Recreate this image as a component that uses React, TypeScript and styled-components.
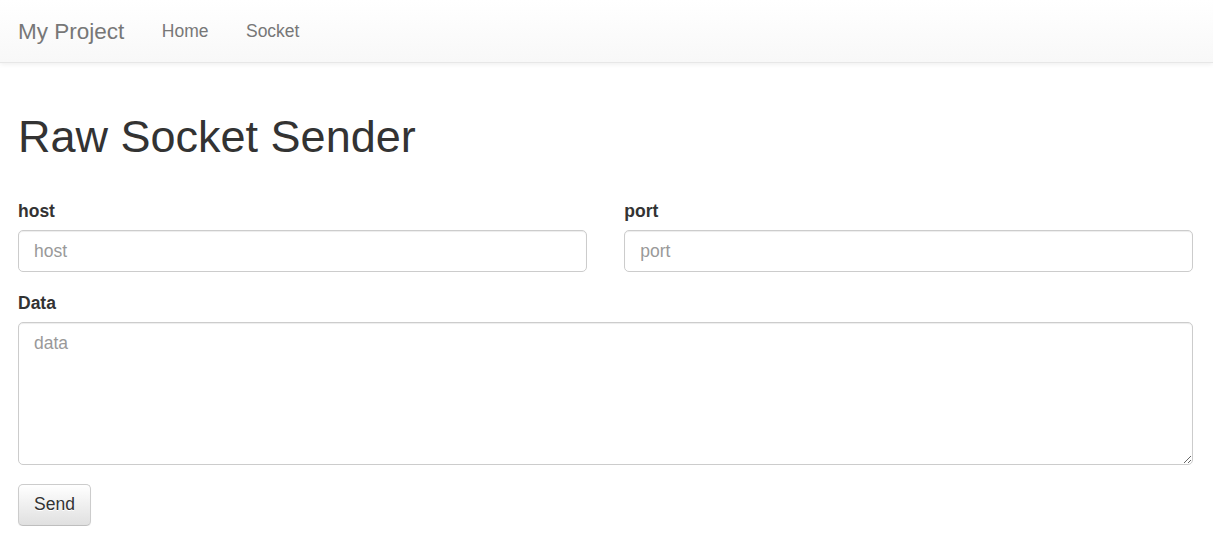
import styled, { createGlobalStyle } from "styled-components";

const GlobalStyle = createGlobalStyle`
  * {
    box-sizing: border-box;
  }
  body {
    margin: 0;
    font-family: "Liberation Sans", Arial, Helvetica, sans-serif;
    font-size: 17.5px;
    line-height: 1.42857;
    color: #333;
    background: #fff;
  }
`;

const Navbar = styled.nav`
  display: flex;
  align-items: stretch;
  height: 62.5px;
  padding: 0 18px;
  margin-bottom: 25px;
  background-image: linear-gradient(to bottom, #fff 0, #f8f8f8 100%);
  border-bottom: 1.25px solid #e7e7e7;
  box-shadow: inset 0 1px 0 rgba(255, 255, 255, 0.15),
    0 1px 5px rgba(0, 0, 0, 0.075);
`;

const Brand = styled.a`
  display: block;
  padding: 18.75px 18.75px 18.75px 0;
  font-size: 22.5px;
  line-height: 25px;
  color: #777;
  text-decoration: none;
  text-shadow: 0 1px 0 rgba(255, 255, 255, 0.25);
`;

const NavList = styled.ul`
  display: flex;
  list-style: none;
  margin: 0;
  padding: 0;
`;

const NavLink = styled.a`
  display: block;
  padding: 18.75px;
  line-height: 25px;
  color: #777;
  text-decoration: none;
  text-shadow: 0 1px 0 rgba(255, 255, 255, 0.25);
`;

const Container = styled.main`
  display: flow-root;
  padding: 0 20px 0 18px;
`;

const Title = styled.h1`
  margin: 24px 0 37.5px;
  font-size: 45px;
  font-weight: 500;
  line-height: 1.1;
  color: #333;
`;

const Row = styled.div`
  display: grid;
  grid-template-columns: 1fr 1fr;
  column-gap: 37.5px;
`;

const FormGroup = styled.div`
  margin-bottom: 18.75px;
`;

const Label = styled.label`
  display: block;
  margin-bottom: 6.25px;
  font-weight: 700;
  line-height: 25px;
`;

const fieldStyles = `
  display: block;
  width: 100%;
  padding: 7.5px 15px;
  font-family: inherit;
  font-size: 17.5px;
  line-height: 25px;
  color: #555;
  background: #fff;
  border: 1.25px solid #ccc;
  border-radius: 5px;
  box-shadow: inset 0 1px 1px rgba(0, 0, 0, 0.075);
  outline: none;
  &::placeholder {
    color: #999;
  }
`;

const Input = styled.input`
  ${fieldStyles}
  height: 42.5px;
`;

const TextArea = styled.textarea`
  ${fieldStyles}
  height: 142.5px;
  resize: vertical;
`;

const Button = styled.button`
  display: inline-block;
  height: 42.5px;
  padding: 7.5px 15px;
  font-family: inherit;
  font-size: 17.5px;
  line-height: 25px;
  color: #333;
  background-image: linear-gradient(to bottom, #fff 0, #e0e0e0 100%);
  border: 1.25px solid #ccc;
  border-color: #ccc #ccc #bebebe;
  border-radius: 5px;
  text-shadow: 0 1px 0 #fff;
  box-shadow: inset 0 1px 0 rgba(255, 255, 255, 0.15),
    0 1px 1px rgba(0, 0, 0, 0.075);
  cursor: pointer;
`;

export default function App() {
  return (
    <>
      <GlobalStyle />
      <Navbar>
        <Brand href="#">My Project</Brand>
        <NavList>
          <li>
            <NavLink href="#">Home</NavLink>
          </li>
          <li>
            <NavLink href="#">Socket</NavLink>
          </li>
        </NavList>
      </Navbar>
      <Container>
        <Title>Raw Socket Sender</Title>
        <form onSubmit={(e) => e.preventDefault()}>
          <Row>
            <FormGroup>
              <Label htmlFor="host">host</Label>
              <Input id="host" placeholder="host" />
            </FormGroup>
            <FormGroup>
              <Label htmlFor="port">port</Label>
              <Input id="port" placeholder="port" />
            </FormGroup>
          </Row>
          <FormGroup>
            <Label htmlFor="data">Data</Label>
            <TextArea id="data" placeholder="data" />
          </FormGroup>
          <Button type="submit">Send</Button>
        </form>
      </Container>
    </>
  );
}
